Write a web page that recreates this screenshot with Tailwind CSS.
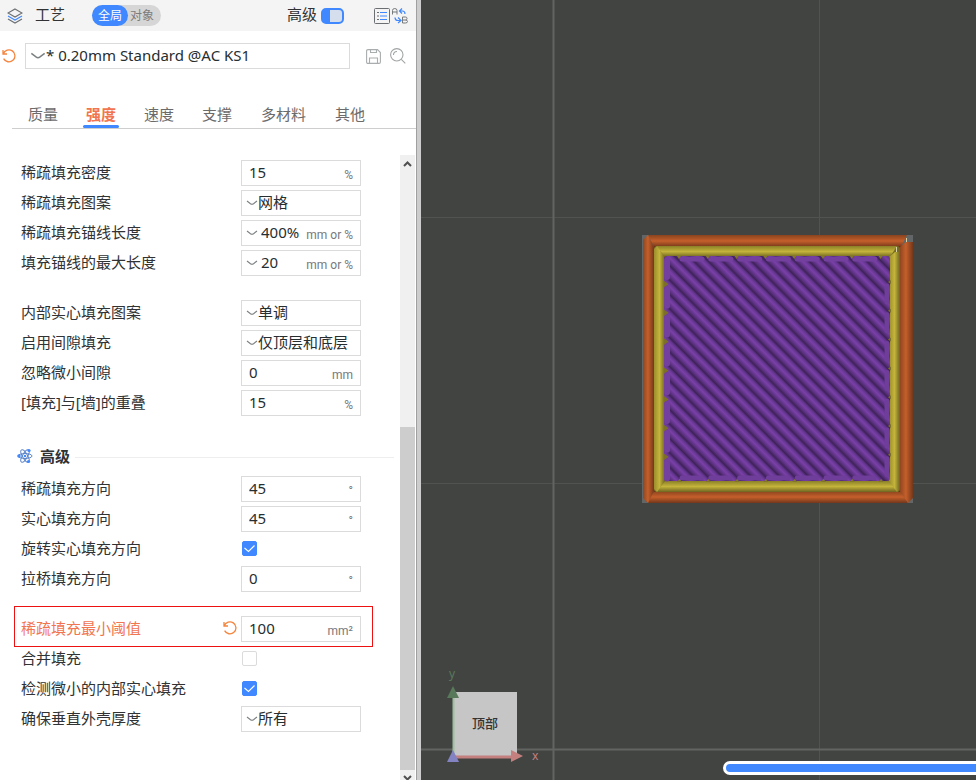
<!DOCTYPE html>
<html lang="zh-CN">

<head>
    <meta charset="UTF-8" />
    <meta name="viewport" content="width=device-width, initial-scale=1" />
    <title>工艺 - 强度</title>
    <script src="https://cdn.jsdelivr.net/npm/@tailwindcss/browser@4"></script>
</head>

<body class="flex h-screen overflow-hidden bg-white font-['Noto_Sans','Noto_Sans_CJK_SC',sans-serif] text-[15px] text-[#303233]">
    <svg class="hidden">
        <symbol id="chevron" viewBox="0 0 12 6">
            <path d="M1 1 L4.5 3.7 Q6 4.8 7.5 3.7 L11 1" fill="none" stroke="#7c8082" stroke-width="1.1" />
        </symbol>
        <symbol id="undo" viewBox="0 0 14 14">
            <path d="M1 1 V5 H5 M1.3 4.8 A6 6 0 1 1 1.6 9.6" fill="none" stroke="#f5843c" stroke-width="1.3" />
        </symbol>
    </svg>

    <!-- settings panel -->
    <aside class="flex w-[416px] shrink-0 flex-col">
        <header class="flex h-[31px] items-center bg-[#f4f4f4] px-[7px]">
            <svg class="size-4" viewBox="0 0 16 16" fill="none" stroke-width="1.1">
                <path d="M8 1 L15 5 L8 9 L1 5 Z" stroke="#6b6f72" />
                <path d="M1 8 L8 12 L15 8" stroke="#3f88ff" />
                <path d="M1 11 L8 15 L15 11" stroke="#6b6f72" />
            </svg>
            <h1 class="ml-3 pb-[2px]">工艺</h1>
            <div class="ml-[27px] flex h-[21px] items-center rounded-full bg-[#d6d6d6] text-[12px] leading-5">
                <button class="h-full rounded-full bg-[#3f88ff] px-[6px] text-white">全局</button>
                <button class="h-full pl-[2px] pr-[7px] text-[#7c7c7c]">对象</button>
            </div>
            <label for="advanced" class="ml-auto pb-[2px]">高级</label>
            <input id="advanced" type="checkbox" checked
                class="ml-1 h-4 w-[23px] appearance-none rounded-[5px] border-2 border-[#3f88ff] bg-[#d5deec] checked:border-l-9" />
            <button class="ml-[30px]" aria-label="列表">
                <svg class="size-4" viewBox="0 0 16 16" fill="none">
                    <rect x="0.5" y="0.5" width="15" height="15" rx="1" stroke="#6b6f72" />
                    <path d="M3 4.5 H5 M3 8 H5 M3 11.5 H5" stroke="#6b6f72" />
                    <path d="M6 4.5 H13 M6 8 H13 M6 11.5 H13" stroke="#3f88ff" />
                </svg>
            </button>
            <button class="ml-[2px]" aria-label="比较">
                <svg class="h-4 w-[17px]" viewBox="0 0 17 16" fill="none">
                    <path d="M0.500 6.500 V2.500 Q0.500 0.500 2.750 0.500 Q5 0.500 5 2.500 V6.500 M0.500 4 H5" stroke="#77797b" />
                    <path d="M10.500 9 V15 H13.500 Q15.500 15 15.500 13.500 Q15.500 12 13.500 12 H10.500 M13.500 12 Q15 12 15 10.500 Q15 9 13.500 9 H10.500" stroke="#77797b" />
                    <path d="M10 0.500 L7.500 3 L10 5.500 M8 3 H10.500 Q13 3 13 6 M6 9.500 L9 12.500 L6 15 M8 12.500 H6 Q3 12.500 3 9.500" stroke="#3f88ff" stroke-width="1.200" />
                </svg>
            </button>
        </header>

        <div class="mt-3 flex h-[26px] items-center">
            <button class="w-[25px] pl-[2px]" aria-label="重置预设"><svg class="size-[14px]"><use href="#undo" /></svg></button>
            <div class="relative h-full w-[325px]">
                <svg class="pointer-events-none absolute left-[5px] top-[9px] h-2 w-4"><use href="#chevron" /></svg>
                <select aria-label="预设"
                    class="size-full appearance-none border border-[#dbdbdb] pb-[2px] pl-5 text-[#262e30]">
                    <option>* 0.20mm Standard @AC KS1</option>
                </select>
            </div>
            <button class="ml-4" aria-label="保存">
                <svg class="size-[15px]" viewBox="0 0 15 15" fill="none" stroke="#a9adae" stroke-width="1.1">
                    <path d="M0.6 2 Q0.600 0.600 2 0.600 H11.500 L14.400 3.500 V13 Q14.400 14.400 13 14.400 H2 Q0.600 14.400 0.600 13 Z" />
                    <path d="M4.500 0.600 V3.500 H10.500 V0.600 M3.500 14.400 V9 H11.500 V14.400" />
                </svg>
            </button>
            <button class="ml-[9px]" aria-label="搜索">
                <svg class="size-4" viewBox="0 0 16 16" fill="none" stroke="#a0a4a5" stroke-width="1.1">
                    <circle cx="6.800" cy="6.800" r="6.200" />
                    <path d="M11.300 11.300 L15.300 15.300 M3.500 7 Q3.500 3.500 7 3.500" />
                </svg>
            </button>
        </div>

        <nav class="ml-3 mt-7 flex h-8 gap-[22px] border-b border-[#cecece] pl-[13px] text-center leading-[34px] text-[#6b6b6b]">
            <a href="#" class="w-9">质量</a>
            <a href="#" class="relative w-9 font-bold text-[#f17551]">强度
                <span class="absolute inset-x-0 bottom-0 h-[3px] rounded-full bg-[#3f88ff]"></span>
            </a>
            <a href="#" class="w-9">速度</a>
            <a href="#" class="w-9">支撑</a>
            <a href="#" class="w-[53px]">多材料</a>
            <a href="#" class="w-9">其他</a>
        </nav>

        <div class="flex min-h-0 flex-1">
            <form id="settings" class="flex-1 overflow-hidden pt-[29px]"></form>

            <!-- scrollbar -->
            <div class="mr-px mt-[26px] flex w-[15px] flex-col bg-[#f0f0f0]">
                <svg class="h-[17px] w-full shrink-0" viewBox="0 0 15 17">
                    <path d="M4 11 L7.500 7.500 L11 11" fill="none" stroke="#505050" stroke-width="2" />
                </svg>
                <div class="grow-[255]"></div>
                <div class="grow-[343] bg-[#cdcdcd]"></div>
                <svg class="h-[10px] w-full shrink-0" viewBox="0 0 15 10">
                    <path d="M4 6 L7.500 9.500 L11 6" fill="none" stroke="#505050" stroke-width="2" />
                </svg>
            </div>
        </div>
    </aside>

    <div class="w-[5px] shrink-0 border-l border-[#a0a0a0] bg-[#cdcdcd]"></div>

    <!-- preview -->
    <main class="relative min-w-0 flex-1 overflow-hidden bg-[#424442]">
        <svg class="size-full" viewBox="421 0 555 780" preserveAspectRatio="xMinYMin slice">
            <defs>
                <linearGradient id="outerH" x2="0" y2="1">
                    <stop offset="0" stop-color="#8a431e" /><stop offset="0.500" stop-color="#c55f2b" /><stop offset="1" stop-color="#73371a" />
                </linearGradient>
                <linearGradient id="outerV">
                    <stop offset="0" stop-color="#8f4620" /><stop offset="0.450" stop-color="#c55f2b" /><stop offset="1" stop-color="#73371a" />
                </linearGradient>
                <linearGradient id="innerH" x2="0" y2="1">
                    <stop offset="0" stop-color="#8b8028" /><stop offset="0.500" stop-color="#c4b43b" /><stop offset="1" stop-color="#6e6420" />
                </linearGradient>
                <linearGradient id="innerV">
                    <stop offset="0" stop-color="#9a8d2d" /><stop offset="0.500" stop-color="#c4b43b" /><stop offset="1" stop-color="#6e6420" />
                </linearGradient>
                <linearGradient id="infill" gradientUnits="userSpaceOnUse" x1="678.300" y1="260" x2="685.500" y2="252.800" spreadMethod="repeat">
                    <stop offset="0" stop-color="#3f2259" /><stop offset="0.250" stop-color="#5d3283" /><stop offset="0.550" stop-color="#7a40a8" /><stop offset="0.800" stop-color="#643690" /><stop offset="1" stop-color="#3f2259" />
                </linearGradient>
            </defs>

            <path d="M819.500 0 V780 M421 217.500 H976 M421 483.500 H976" stroke="#505350" />
            <path d="M553.500 0 V780 M421 749.500 H976" stroke="#616461" stroke-width="2" />

            <rect x="642" y="235" width="271" height="268" fill="#626666" />
            <path d="M648 235 H907 L901 247 H654 Z" fill="url(#outerH)" />
            <path d="M654 491 H901 L908 503 H648 L643 498 Z" fill="url(#outerH)" />
            <path d="M643 240 L648 235 L654 247 V491 L648 503 L643 498 Z" fill="url(#outerV)" />
            <path d="M900 247 L906 242 H913 V498 L908 503 L900 491 Z" fill="url(#outerV)" />
            <rect x="654" y="246" width="246" height="246" fill="#6b3118" />
            <rect x="654" y="246" width="246" height="246" rx="3" fill="#756a22" />
            <path d="M657 246 H897 L890 257 H664 Z" fill="url(#innerH)" />
            <path d="M664 481 H890 L898 492 H657 Z" fill="url(#innerH)" />
            <path d="M654 249 L657 246 L665 257 V481 L657 492 L654 489 Z" fill="url(#innerV)" />
            <path d="M889 257 L895 252 H900 V489 L897 492 L889 481 Z" fill="url(#innerV)" />
            <path d="M896 247 H897 V252 H896 Z M906 238 H907 V242 H906 Z" fill="#d8d0a8" />
            <g id="solid"></g>

            <!-- view cube -->
            <path d="M453 692 H517 V757 H453 Z" fill="#c6c6c6" />
            <path d="M453.500 757 V696" stroke="#9fc0a0" stroke-width="2" />
            <path d="M447 698 L453 686 L459 698 Z" fill="#587a5b" />
            <path d="M453 757 H512" stroke="#c47f7f" stroke-width="3" />
            <path d="M447 762 L453 750 L459 762 Z" fill="#8383c4" />
            <path d="M511 750 L523 756 L511 762 Z" fill="#c47f7f" />
            <text x="472" y="728" font-size="13" font-weight="500" fill="#333">顶部</text>
            <text x="449" y="678" font-size="12" fill="#587a5b">y</text>
            <text x="532" y="760" font-size="12" fill="#c47f7f">x</text>
        </svg>
        <input type="range" aria-label="步骤"
            class="absolute -right-3 bottom-[5px] left-[302px] h-[14px] appearance-none rounded-full border-[3px] border-white bg-[#3f88ff] [&::-webkit-slider-thumb]:opacity-0" />
    </main>

    <script>
        const settings = [
            { label: "稀疏填充密度", value: "15", unit: "%" },
            { label: "稀疏填充图案", options: ["网格"] },
            { label: "稀疏填充锚线长度", options: ["400%"], unit: "mm or %" },
            { label: "填充锚线的最大长度", options: ["20"], unit: "mm or %" },
            { gap: true },
            { label: "内部实心填充图案", options: ["单调"] },
            { label: "启用间隙填充", options: ["仅顶层和底层"] },
            { label: "忽略微小间隙", value: "0", unit: "mm" },
            { label: "[填充]与[墙]的重叠", value: "15", unit: "%" },
            { gap: true },
            { heading: "高级" },
            { label: "稀疏填充方向", value: "45", unit: "°" },
            { label: "实心填充方向", value: "45", unit: "°" },
            { label: "旋转实心填充方向", checked: true },
            { label: "拉桥填充方向", value: "0", unit: "°" },
            { gap: true },
            { label: "稀疏填充最小阈值", value: "100", unit: "mm²", changed: true },
            { label: "合并填充", checked: false },
            { label: "检测微小的内部实心填充", checked: true },
            { label: "确保垂直外壳厚度", options: ["所有"] },
        ];

        function control(s, id) {
            if ("checked" in s) {
                return `<span class="relative mb-[2px] ml-px size-[15px]">
                    <input id="${id}" type="checkbox" ${s.checked ? "checked" : ""} class="peer block size-full appearance-none rounded-[2px] border border-[#dbdbdb] checked:border-[#3f88ff] checked:bg-[#3f88ff]">
                    <svg class="pointer-events-none absolute inset-0 hidden peer-checked:block" viewBox="0 0 15 15"><path d="M2.500 7 L6.500 10.500 L12.500 4.500" fill="none" stroke="#fff" stroke-width="1.100"/></svg>
                </span>`;
            }
            const unit = s.unit ? `<span class="pointer-events-none absolute right-2 top-[6px] font-[Roboto] text-[12px] leading-[18px] text-[#77797c]">${s.unit}</span>` : "";
            if (s.options) {
                return `<div class="relative h-[26px] w-[120px]">
                    <svg class="pointer-events-none absolute left-[5px] top-[10px] h-[6px] w-3"><use href="#chevron"/></svg>
                    <select id="${id}" class="size-full appearance-none border border-[#dbdbdb] pb-[2px] ${s.unit ? "pl-[19px]" : "pl-4"} text-[#262e30]">${s.options.map(o => `<option>${o}</option>`).join("")}</select>${unit}
                </div>`;
            }
            return `<div class="relative h-[26px] w-[120px]">
                <input id="${id}" value="${s.value}" class="size-full border border-[#dbdbdb] pb-[2px] pl-[7px] text-[#262e30]">${unit}
            </div>`;
        }

        function row(s, i) {
            if (s.gap) return `<div class="h-5"></div>`;
            if (s.heading) {
                return `<h2 class="flex h-9 items-center pl-[17px] pr-[6px] font-bold">
                    <svg class="mr-[7px] size-4" viewBox="0 0 16 16" fill="none" stroke="#5f86c8">
                        <ellipse cx="8" cy="8" rx="7" ry="2.500"/>
                        <ellipse cx="8" cy="8" rx="7" ry="2.500" transform="rotate(60 8 8)"/>
                        <ellipse cx="8" cy="8" rx="7" ry="2.500" transform="rotate(120 8 8)"/>
                        <g fill="#3f88ff" stroke="none"><circle cx="8" cy="8" r="1.200"/><circle cx="2" cy="8" r="1.700"/><circle cx="12" cy="2.500" r="1.600"/><circle cx="11.500" cy="13.500" r="1.600"/></g>
                    </svg>${s.heading}<span class="ml-[5px] mt-[2px] h-px flex-1 bg-[#eee]"></span>
                </h2>`;
            }
            const id = `opt${i}`;
            return `<div class="relative flex h-[30px] items-center pl-[21px]">
                <div class="flex w-[220px] items-center justify-between pb-[2px] pr-1">
                    <label for="${id}" class="${s.changed ? "text-[#f17551]" : ""}">${s.label}</label>
                    ${s.changed ? `<button type="button" aria-label="重置"><svg class="size-[14px]"><use href="#undo"/></svg></button>` : ""}
                </div>
                ${control(s, id)}
                ${s.changed ? `<span class="pointer-events-none absolute -bottom-[3px] -top-2 left-[14px] w-[359px] border border-[#ee1111]"></span>` : ""}
            </div>`;
        }

        document.getElementById("settings").innerHTML = settings.map(row).join("");

        // infill area: striped body, turn caps and the notches between them
        const step = 28.8;
        let shapes = `<rect x="664" y="256" width="226" height="225" rx="3" fill="url(#infill)"/>`;
        for (let i = 0; i < 8; i++) {
            const x = 681 + i * step;
            const y = 260 + i * step;
            if (i < 7) {
                shapes += `<path d="M${x + 1} 259 H${x + 21}" stroke="#7440a0" stroke-width="5" stroke-linecap="round"/>`;
                shapes += `<path d="M${x + 1} 478 H${x + 20}" stroke="#6f3d9a" stroke-width="5" stroke-linecap="round"/>`;
                shapes += `<path d="M887 ${y + 26} v16" stroke="#6f3d9a" stroke-width="5" stroke-linecap="round"/>`;
                shapes += `<path d="M664 ${y + 21} l4.500 3 l-4.500 4 Z M891 ${y + 20} l-3 2 l3 2 Z" fill="#7b7026"/>`;
            }
            shapes += `<path d="M${x - 4} 256 h4 l-2 3 Z M${x - 4} 482 l2.500 -3 l2.500 3 Z" fill="#83782a"/>`;
            shapes += `<path d="M667 ${y} v17" stroke="#7440a0" stroke-width="6" stroke-linecap="round"/>`;
        }
        document.getElementById("solid").innerHTML = shapes;
    </script>
</body>

</html>
